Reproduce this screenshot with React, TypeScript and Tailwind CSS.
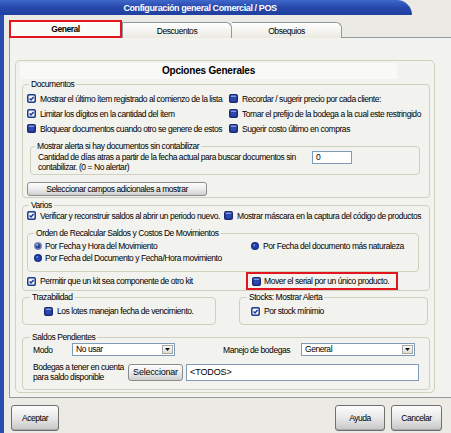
import React from 'react';

function CheckBox({ checked }: { checked?: boolean }) {
  if (checked) {
    return (
      <svg width="9" height="9" viewBox="0 0 9 9" className="shrink-0">
        <rect x="0" y="0" width="9" height="9" rx="2" fill="#1f3b8c" />
        <rect x="1.5" y="1.5" width="6" height="6" rx="1" fill="#f2f4fc" />
        <path d="M2.6 4.4 L4 5.9 L6.6 2.9" fill="none" stroke="#1f3b8c" strokeWidth="1.5" />
      </svg>
    );
  }
  return (
    <svg width="9" height="9" viewBox="0 0 9 9" className="shrink-0">
      <rect x="0" y="0" width="9" height="9" rx="2" fill="#1a2a72" />
      <rect x="1.5" y="1.5" width="6" height="6" rx="1" fill="#2c49ad" />
      <rect x="1.5" y="1.5" width="6" height="1.5" rx="0.7" fill="#7d95dc" />
    </svg>
  );
}

function Radio({ light }: { light?: boolean }) {
  return (
    <svg width="8" height="8" viewBox="0 0 8 8" className="shrink-0">
      <circle cx="4" cy="4" r="4" fill={light ? '#7d8cbc' : '#172e86'} />
      <circle cx="4" cy="4" r="2.6" fill={light ? '#2e4596' : '#2544b0'} />
      <circle cx="3.2" cy="3" r="1" fill={light ? '#a9b6de' : '#6f8ddf'} />
    </svg>
  );
}

function Check({ label, checked }: { label: string; checked?: boolean }) {
  return (
    <div className="flex items-center gap-[4px] whitespace-nowrap">
      <CheckBox checked={checked} />
      <span>{label}</span>
    </div>
  );
}

function Select({ value, className }: { value: string; className: string }) {
  return (
    <div className={`flex h-[13px] border border-[#7f9db9] bg-white ${className}`}>
      <span className="flex-1 pl-[3px] leading-[11px]">{value}</span>
      <span className="w-[11px] my-[1px] mr-[1px] flex items-center justify-center bg-gradient-to-b from-[#fafafa] to-[#dcdcd6] border border-[#a8a8a0]">
        <svg width="5" height="3" viewBox="0 0 5 3">
          <path d="M0 0 H5 L2.5 3 Z" fill="#111" />
        </svg>
      </span>
    </div>
  );
}

function WinButton({ label, className }: { label: string; className: string }) {
  return (
    <div
      className={`h-[26px] flex items-center justify-center border border-[#6f6f6f] rounded-[3px] bg-gradient-to-b from-[#fdfdfd] via-[#e8e8e8] to-[#c6c6c6] shadow-[inset_0_-1px_0_#a9a9a9] ${className}`}
    >
      {label}
    </div>
  );
}

export default function App() {
  return (
    <div className="w-[451px] h-[433px] overflow-hidden bg-[#ebeae4] flex flex-col font-['Liberation_Sans',Arial,sans-serif] text-[8.5px] leading-[10px] tracking-[-0.45px] text-black">
      {/* title bar */}
      <div className="h-[15px] flex shrink-0">
        <div className="w-[412px] shrink-0 rounded-tr-[16px] bg-gradient-to-b from-[#4068cc] via-[#2648aa] to-[#1f40a0] flex items-center justify-center pr-[12px] text-white font-bold text-[9px] tracking-[-0.4px]">
          Configuración general Comercial / POS
        </div>
        <div className="flex-1" />
      </div>

      <div className="flex flex-1 min-h-0">
        <div className="w-[4px] shrink-0 bg-[#2a4db0]" />
        <div className="flex-1 min-w-0 flex flex-col pl-[5px]">
          {/* tabs */}
          <div className="relative z-10 mt-[5px] h-[18px] flex items-end">
            <div className="w-[113px] shrink-0 h-[18px] border-2 border-[#e1161f] bg-[#fbfbf8] font-bold flex items-center justify-center">
              General
            </div>
            <div className="w-[110px] shrink-0 h-[16px] border border-b-0 border-[#919b9c] rounded-tr-[6px] bg-gradient-to-b from-white to-[#ebe9e1] flex items-center justify-center">
              Descuentos
            </div>
            <div className="w-[110px] shrink-0 h-[16px] border border-b-0 border-l-0 border-[#919b9c] rounded-tr-[6px] bg-gradient-to-b from-white to-[#ebe9e1] flex items-center justify-center">
              Obsequios
            </div>
          </div>

          {/* tab panel */}
          <div className="-mt-[1px] w-[450px] shrink-0 border border-[#919b9c] bg-[#f2f2ee] pl-[5px] pt-[22px] pb-[4px]">
            <div className="w-[420px] border border-[#d0d0bf] rounded-[5px] flex flex-col px-[6px] pb-[2px]">
              <div className="mt-[2px] -ml-[2px] w-[377px] h-[16px] bg-[#f9f9f7] flex items-center justify-center font-bold text-[10px] tracking-[-0.2px]">
                Opciones Generales
              </div>

              {/* Documentos */}
              <fieldset className="w-[408px] border border-[#d0d0bf] rounded-[4px]">
                <legend className="ml-[6px] px-[2px]">Documentos</legend>
                <div className="pl-[4px] pt-[2px] pb-[1px]">
                  <div className="grid grid-cols-[202px_1fr] auto-rows-[15px] items-center">
                    <Check checked label="Mostrar el último ítem registrado al comienzo de la lista" />
                    <Check label="Recordar / sugerir precio por cada cliente:" />
                    <Check checked label="Limitar los dígitos en la cantidad del ítem" />
                    <Check label="Tomar el prefijo de la bodega a la cual este restringido" />
                    <Check label="Bloquear documentos cuando otro se genere de estos" />
                    <Check label="Sugerir costo último en compras" />
                  </div>

                  <fieldset className="mt-[5px] ml-[3px] w-[390px] border border-[#d0d0bf] rounded-[4px]">
                    <legend className="ml-[4px] px-[2px]">Mostrar alerta si hay documentos sin contabilizar</legend>
                    <div className="flex pl-[7px] pb-[2px]">
                      <div className="w-[274px] pt-[1px] whitespace-nowrap">
                        Cantidad de días atras a partir de la fecha actual para buscar documentos sin
                        <br />
                        contabilizar. (0 = No alertar)
                      </div>
                      <div className="w-[40px] h-[13px] border border-[#7f9db9] bg-white pl-[3px] leading-[11px]">0</div>
                    </div>
                  </fieldset>

                  <div className="mt-[7px] w-[180px] h-[14px] border border-[#8c8c8c] rounded-[3px] bg-gradient-to-b from-[#fdfdfd] via-[#ececec] to-[#cfcfcf] flex items-center justify-center">
                    Seleccionar campos adicionales a mostrar
                  </div>
                </div>
              </fieldset>

              {/* Varios */}
              <fieldset className="mt-[2px] w-[408px] border border-[#d0d0bf] rounded-[4px]">
                <legend className="ml-[6px] px-[2px]">Varios</legend>
                <div className="pl-[4px]">
                  <div className="grid grid-cols-[197px_1fr] h-[11px] items-center">
                    <Check checked label="Verificar y reconstruir saldos al abrir un periodo nuevo." />
                    <Check label="Mostrar máscara en la captura del código de productos" />
                  </div>

                  <fieldset className="mt-[7px] w-[392px] border border-[#d0d0bf] rounded-[4px]">
                    <legend className="ml-[6px] px-[2px]">Orden de Recalcular Saldos y Costos De Movimientos</legend>
                    <div className="pl-[6px] pt-[2px] pb-[7px] grid grid-cols-[217px_1fr] auto-rows-[12px] items-center">
                      <div className="flex items-center gap-[3px] whitespace-nowrap">
                        <Radio light />
                        <span>Por Fecha y Hora del Movimiento</span>
                      </div>
                      <div className="flex items-center gap-[4px] whitespace-nowrap">
                        <Radio />
                        <span>Por Fecha del documento más naturaleza</span>
                      </div>
                      <div className="flex items-center gap-[3px] whitespace-nowrap">
                        <Radio />
                        <span>Por Fecha del Documento y Fecha/Hora movimiento</span>
                      </div>
                    </div>
                  </fieldset>

                  <div className="flex h-[18px] items-center">
                    <div className="w-[219px]">
                      <Check checked label="Permitir que un kit sea componente de otro kit" />
                    </div>
                    <div className="w-[152px] h-[18px] border-2 border-[#e1161f] flex items-center gap-[3px] pl-[4px] whitespace-nowrap">
                      <CheckBox />
                      <span>Mover el serial por un único producto.</span>
                    </div>
                  </div>
                </div>
              </fieldset>

              {/* Trazabilidad / Stocks */}
              <div className="mt-[1px] flex gap-[23px]">
                <fieldset className="w-[195px] border border-[#d0d0bf] rounded-[4px]">
                  <legend className="ml-[7px] px-[2px]">Trazabilidad</legend>
                  <div className="pl-[21px] pt-[3px] pb-[7px] h-[22px] flex items-start">
                    <div className="h-[12px] flex items-center">
                      <Check label="Los lotes manejan fecha de vencimiento." />
                    </div>
                  </div>
                </fieldset>
                <fieldset className="w-[190px] border border-[#d0d0bf] rounded-[4px]">
                  <legend className="ml-[7px] px-[2px]">Stocks: Mostrar Alerta</legend>
                  <div className="pl-[11px] pt-[3px] pb-[7px] h-[22px] flex items-start">
                    <div className="h-[12px] flex items-center">
                      <Check checked label="Por stock mínimio" />
                    </div>
                  </div>
                </fieldset>
              </div>

              {/* Saldos Pendientes */}
              <fieldset className="mt-[7px] w-[408px] border border-[#d0d0bf] rounded-[4px]">
                <legend className="ml-[7px] px-[2px]">Saldos Pendientes</legend>
                <div className="pl-[10px] pt-[1px] pb-[8px]">
                  <div className="flex h-[13px] items-center">
                    <span className="w-[39px]">Modo</span>
                    <Select value="No usar" className="w-[103px]" />
                    <span className="w-[48px]" />
                    <span className="w-[78px]">Manejo de bodegas</span>
                    <Select value="General" className="w-[114px]" />
                  </div>
                  <div className="mt-[7px] flex h-[18px] items-center">
                    <div className="w-[95px] whitespace-nowrap">
                      Bodegas a tener en cuenta
                      <br />
                      para saldo disponible
                    </div>
                    <div className="w-[55px] h-[17px] border border-[#8c8c8c] rounded-[3px] bg-gradient-to-b from-[#fdfdfd] via-[#ececec] to-[#cfcfcf] flex items-center justify-center text-[9px] tracking-[-0.2px]">
                      Seleccionar
                    </div>
                    <div className="ml-[3px] w-[233px] h-[17px] border border-[#7f9db9] bg-white flex items-center pl-[3px] text-[9px] tracking-[-0.1px]">
                      &lt;TODOS&gt;
                    </div>
                  </div>
                </div>
              </fieldset>
            </div>
          </div>

          {/* bottom buttons */}
          <div className="mt-[7px] flex pl-[2px] pr-[9px]">
            <WinButton label="Aceptar" className="w-[48px]" />
            <div className="flex-1" />
            <WinButton label="Ayuda" className="w-[50px]" />
            <WinButton label="Cancelar" className="ml-[6px] w-[51px]" />
          </div>
        </div>
      </div>
    </div>
  );
}
